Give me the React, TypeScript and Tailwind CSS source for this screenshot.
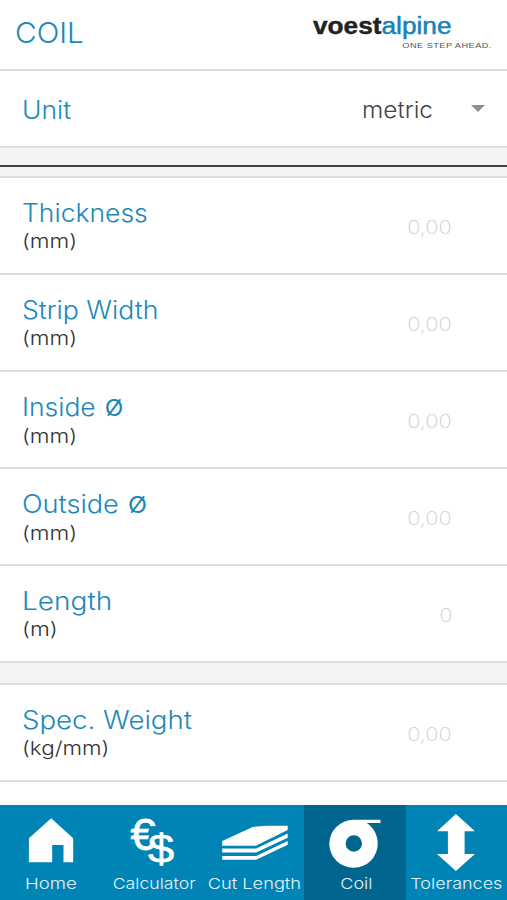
import type { ReactNode } from "react";

type Field = {
  label: string;
  unit: string;
  placeholder: string;
  labelClass: string;
  unitClass: string;
  diameter?: boolean;
};

const dimensions: Field[] = [
  { label: "Thickness", unit: "(mm)", placeholder: "0,00", labelClass: "scale-x-[1.06]", unitClass: "scale-x-[1.19]" },
  { label: "Strip Width", unit: "(mm)", placeholder: "0,00", labelClass: "scale-x-[1.065]", unitClass: "scale-x-[1.19]" },
  { label: "Inside", unit: "(mm)", placeholder: "0,00", labelClass: "scale-x-[1.06]", unitClass: "scale-x-[1.19]", diameter: true },
  { label: "Outside", unit: "(mm)", placeholder: "0,00", labelClass: "scale-x-[1.085]", unitClass: "scale-x-[1.19]", diameter: true },
  { label: "Length", unit: "(m)", placeholder: "0", labelClass: "scale-x-[1.12]", unitClass: "scale-x-[1.2]" },
];

const weight: Field = {
  label: "Spec. Weight",
  unit: "(kg/mm)",
  placeholder: "0,00",
  labelClass: "scale-x-[1.105]",
  unitClass: "scale-x-[1.18]",
};

function FieldRow({ field }: { field: Field }) {
  return (
    <div className="flex h-[97px] items-start justify-between border-b-2 border-[#dedede] bg-white pl-[22px] pr-[55px]">
      <div className="flex flex-col items-start pt-[19px] whitespace-nowrap">
        <span className={`origin-left text-[25px] leading-[33px] text-[#2088b8] ${field.labelClass}`}>
          {field.label}
          {field.diameter && <span className="ml-[2px] text-[23px] font-normal"> Ø</span>}
        </span>
        <span className={`origin-left text-[19px] leading-[24px] text-[#333] ${field.unitClass}`}>
          {field.unit}
        </span>
      </div>
      <span className="mt-[38px] origin-right scale-x-[1.15] text-[19px] leading-[24px] font-extralight text-[#cfcfcf]">
        {field.placeholder}
      </span>
    </div>
  );
}

function Logo() {
  return (
    <div className="flex w-[179px] flex-col font-['Liberation_Sans'] whitespace-nowrap">
      <div className="origin-left scale-x-[1.14] text-[23px] leading-[28px]">
        <span className="font-bold text-[#222] [-webkit-text-stroke:0.4px_#222]">voest</span>
        <span className="text-[#1683b8] [-webkit-text-stroke:0.5px_#1683b8]">alpine</span>
      </div>
      <span className="mt-[1px] origin-right scale-x-[1.15] self-end text-[8px] leading-[10px] tracking-[0.4px] text-[#555]">
        ONE STEP AHEAD.
      </span>
    </div>
  );
}

function HomeIcon() {
  return (
    <svg className="h-[60px] w-full" viewBox="0 0 101 60">
      <path d="M51 13.300 73 33.300V57.300H63.300V40H52V57.300H28.700V33.300Z" fill="#fff" />
    </svg>
  );
}

function CurrencyIcon() {
  return (
    <div className="relative h-[60px] w-full font-['Liberation_Sans'] font-normal text-white">
      <span className="absolute top-[8px] left-[29px] text-[45px] leading-[44px] [-webkit-text-stroke:0.8px_#fff]">€</span>
      <span className="absolute top-[24px] left-[47px] origin-left scale-x-[1.15] text-[41px] leading-[41px] [-webkit-text-stroke:0.6px_#fff]">
        $
      </span>
    </div>
  );
}

function SheetsIcon() {
  return (
    <svg className="h-[60px] w-full" viewBox="0 0 101 60" fill="#fff">
      <path d="M19 36 49.500 22 63 20.700H84.500V25L52.700 40.700H19Z" />
      <path d="M19 43.500H53L84.500 28.500V32.700L53 47.500H19Z" />
      <path d="M19 51H53L84.500 36V39.700L53 54.700H19Z" />
    </svg>
  );
}

function CoilIcon() {
  return (
    <svg className="h-[60px] w-full overflow-visible" viewBox="0 0 101 60">
      <path
        fill="#fff"
        fillRule="evenodd"
        d="M49.300 14.800H76.200V18H62.500C69.500 22.500 73.500 30 73.500 38.200A24.200 24 0 1 1 49.300 14.800ZM49.600 30.300A8.200 8.200 0 1 0 49.600 46.700A8.200 8.200 0 1 0 49.600 30.300Z"
      />
    </svg>
  );
}

function ArrowsIcon() {
  return (
    <svg className="h-[60px] w-full overflow-visible" viewBox="0 0 101 60">
      <path d="M49.700 9 68.700 26.300H58.400V49H68.700L49.700 66 30.800 49H41.700V26.300H30.800Z" fill="#fff" />
    </svg>
  );
}

type Tab = { label: string; icon: ReactNode; labelClass: string; active?: boolean };

const tabs: Tab[] = [
  { label: "Home", icon: <HomeIcon />, labelClass: "scale-x-[1.24]" },
  { label: "Calculator", icon: <CurrencyIcon />, labelClass: "ml-[4px] scale-x-[1.18]" },
  { label: "Cut Length", icon: <SheetsIcon />, labelClass: "ml-[1px] scale-x-[1.215]" },
  { label: "Coil", icon: <CoilIcon />, labelClass: "ml-[3px] scale-x-[1.2]", active: true },
  { label: "Tolerances", icon: <ArrowsIcon />, labelClass: "scale-x-[1.2]" },
];

export default function App() {
  return (
    <div className="flex h-[900px] w-[507px] flex-col overflow-hidden bg-white font-['Inter',sans-serif] font-light">
      {/* Header */}
      <header className="flex h-[71px] shrink-0 items-start justify-between border-b-2 border-[#dedede] pt-[12px] pr-[15px] pl-[15px]">
        <h1 className="mt-[4px] origin-left scale-x-[1.025] text-[29px] leading-[34px] text-[#2088b8]">COIL</h1>
        <Logo />
      </header>

      {/* Unit selector */}
      <div className="flex h-[77px] shrink-0 items-center border-b-2 border-[#dedede] pt-[2px] pr-[22px] pl-[22px]">
        <span className="origin-left scale-x-[1.06] text-[25px] leading-[32px] text-[#2088b8]">Unit</span>
        <span className="ml-auto origin-right scale-x-[1.06] text-[23px] leading-[32px] text-[#444]">metric</span>
        <svg className="mb-[2px] ml-[38px] h-[7px] w-[14px]" viewBox="0 0 14 7">
          <path d="M0 0H14L7 7Z" fill="#8e8e8e" />
        </svg>
      </div>

      {/* Input fields */}
      <main className="min-h-0 flex-1">
        <div className="h-[19px] border-b-2 border-[#444] bg-[#f4f4f4]" />
        <div className="h-[11px] border-b-2 border-[#dedede] bg-[#f4f4f4]" />
        {dimensions.map((field) => (
          <FieldRow key={field.label} field={field} />
        ))}
        <div className="h-[22px] border-b-2 border-[#dedede] bg-[#f4f4f4]" />
        <FieldRow field={weight} />
      </main>

      {/* Tab bar */}
      <nav className="grid h-[95px] shrink-0 grid-cols-5 bg-[#0083b5]">
        {tabs.map((tab) => (
          <button
            key={tab.label}
            className={`flex min-w-0 flex-col items-center ${tab.active ? "bg-[#00658f]" : ""}`}
          >
            {tab.icon}
            <span className={`mt-[9px] text-[15px] leading-[20px] whitespace-nowrap text-[#e4f3fa] ${tab.labelClass}`}>
              {tab.label}
            </span>
          </button>
        ))}
      </nav>
    </div>
  );
}
